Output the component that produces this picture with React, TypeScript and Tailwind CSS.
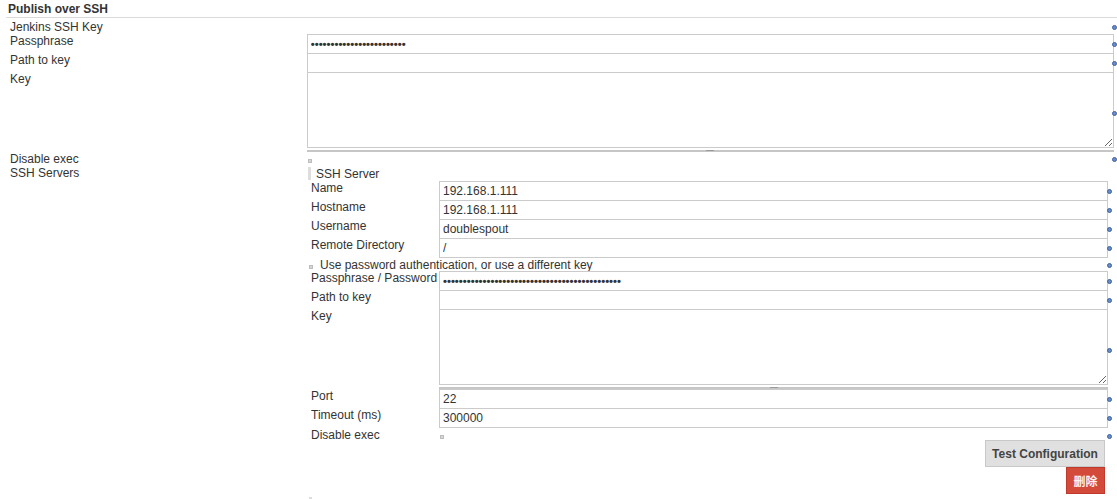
import React from 'react';

// Jenkins "Publish over SSH" config block

const HelpIcon = ({ className = '' }: { className?: string }) => (
  <div className={`h-[5px] w-[5px] shrink-0 rounded-full border border-[#3a62a3] bg-[#6b8cc6] ${className}`} />
);

const Check = ({ className = '' }: { className?: string }) => (
  <div className={`h-[4px] w-[4px] border border-[#bdbdbd] bg-[#d6d6d6] ${className}`} />
);

const Field = ({ value = '', dots = false }: { value?: string; dots?: boolean }) => (
  <input
    readOnly
    value={value}
    className={`block h-[20px] w-full border border-[#cbcbcb] bg-white px-[3px] text-[#333] outline-none ${
      dots ? 'text-[11.3px] font-bold text-[#222]' : 'text-[12px]'
    }`}
  />
);

const Grip = () => (
  <div className="mt-[2px] flex h-[2px] justify-center bg-[#c6c6c6]">
    <div className="h-[1px] w-[8px] bg-[#9a9a9a]" />
  </div>
);

const Area = () => (
  <div>
    <textarea readOnly className="block h-[76px] w-full border border-[#cbcbcb] bg-white outline-none" />
    <Grip />
  </div>
);

const InnerRow = ({ label, children }: { label: string; children: React.ReactNode }) => (
  <div className="flex h-[19px]">
    <div className="w-[132px] pl-[4px]">{label}</div>
    <div className="w-[669px]">{children}</div>
    <div className="flex items-center">
      <HelpIcon className="-ml-px mt-[1px]" />
    </div>
  </div>
);

const OuterRow = ({ label, children }: { label: string; children: React.ReactNode }) => (
  <div className="flex h-[19px]">
    <div className="w-[307px] pl-[10px]">{label}</div>
    <div className="w-[808px]">{children}</div>
    <div className="flex items-center">
      <HelpIcon className="-ml-[2px] mt-[1px]" />
    </div>
  </div>
);

const bullets = (n: number) => '\u2022'.repeat(n);

export default function App() {
  return (
    <div className="h-[499px] w-[1117px] overflow-hidden bg-white font-['Liberation_Sans',Arial,sans-serif] text-[12px] leading-[14px] text-[#333]">
      <div className="ml-[6px] h-[18px] border-b border-[#dadada] pl-[2px] pt-[2px] font-bold">Publish over SSH</div>

      {/* Jenkins SSH Key */}
      <div className="flex h-[16px]">
        <div className="w-[307px] pl-[10px] pt-[2px]">Jenkins SSH Key</div>
        <div className="w-[808px]" />
        <div className="flex items-center pt-[2px]">
          <HelpIcon className="-ml-[2px]" />
        </div>
      </div>
      <OuterRow label="Passphrase">
        <Field value={bullets(24)} dots />
      </OuterRow>
      <OuterRow label="Path to key">
        <Field />
      </OuterRow>
      <div className="flex h-[80px]">
        <div className="w-[307px] pl-[10px]">Key</div>
        <div className="w-[808px]">
          <Area />
        </div>
        <div>
          <HelpIcon className="-ml-[2px] mt-[39px]" />
        </div>
      </div>
      <div className="flex h-[14px]">
        <div className="w-[307px] pl-[10px]">Disable exec</div>
        <div className="w-[808px]">
          <Check className="ml-[1px] mt-[7px]" />
        </div>
        <div className="flex items-center">
          <HelpIcon className="-ml-[2px] mt-[1px]" />
        </div>
      </div>

      {/* SSH Servers */}
      <div className="flex">
        <div className="w-[307px] pl-[10px]">SSH Servers</div>
        <div className="w-[810px]">
          <div className="flex h-[15px]">
            <div className="ml-[1px] mt-[1px] h-[13px] w-[3px] bg-[#dddddd]" />
            <div className="ml-[5px] mt-px">SSH Server</div>
          </div>
          <InnerRow label="Name">
            <Field value="192.168.1.111" />
          </InnerRow>
          <InnerRow label="Hostname">
            <Field value="192.168.1.111" />
          </InnerRow>
          <InnerRow label="Username">
            <Field value="doublespout" />
          </InnerRow>
          <InnerRow label="Remote Directory">
            <Field value="/" />
          </InnerRow>
          <div className="flex h-[14px]">
            <div className="flex w-[801px]">
              <Check className="ml-[2px] mt-[8px]" />
              <div className="ml-[7px] mt-px">Use password authentication, or use a different key</div>
            </div>
            <div className="flex items-center">
              <HelpIcon className="-ml-px mt-[2px]" />
            </div>
          </div>
          <InnerRow label="Passphrase / Password">
            <Field value={bullets(45)} dots />
          </InnerRow>
          <InnerRow label="Path to key">
            <Field />
          </InnerRow>
          <div className="flex h-[80px]">
            <div className="w-[132px] pl-[4px]">Key</div>
            <div className="w-[669px]">
              <Area />
            </div>
            <div>
              <HelpIcon className="-ml-px mt-[39px]" />
            </div>
          </div>
          <InnerRow label="Port">
            <Field value="22" />
          </InnerRow>
          <InnerRow label="Timeout (ms)">
            <Field value="300000" />
          </InnerRow>
          <div className="mt-px flex h-[12px]">
            <div className="w-[132px] pl-[4px]">Disable exec</div>
            <div className="w-[669px]">
              <Check className="ml-[1px] mt-[7px]" />
            </div>
            <div>
              <HelpIcon className="-ml-px mt-[6px]" />
            </div>
          </div>
          <div className="flex w-[801px] flex-col items-end pr-[3px]">
            <button className="h-[27px] w-[120px] border border-[#c8c8c8] bg-[#e0e0e0] text-[12px] font-bold text-[#444]">
              Test Configuration
            </button>
            <button className="h-[27px] w-[39px] border border-[#bf3a2c] bg-[#d44a3a] font-['Noto_Sans_CJK_SC',sans-serif] text-[12px] font-bold text-[#fff0f0]">
              删除
            </button>
          </div>
          <div className="ml-[2px] mt-[3px] h-[3px] w-[3px] bg-[#dddddd]" />
        </div>
      </div>
    </div>
  );
}
